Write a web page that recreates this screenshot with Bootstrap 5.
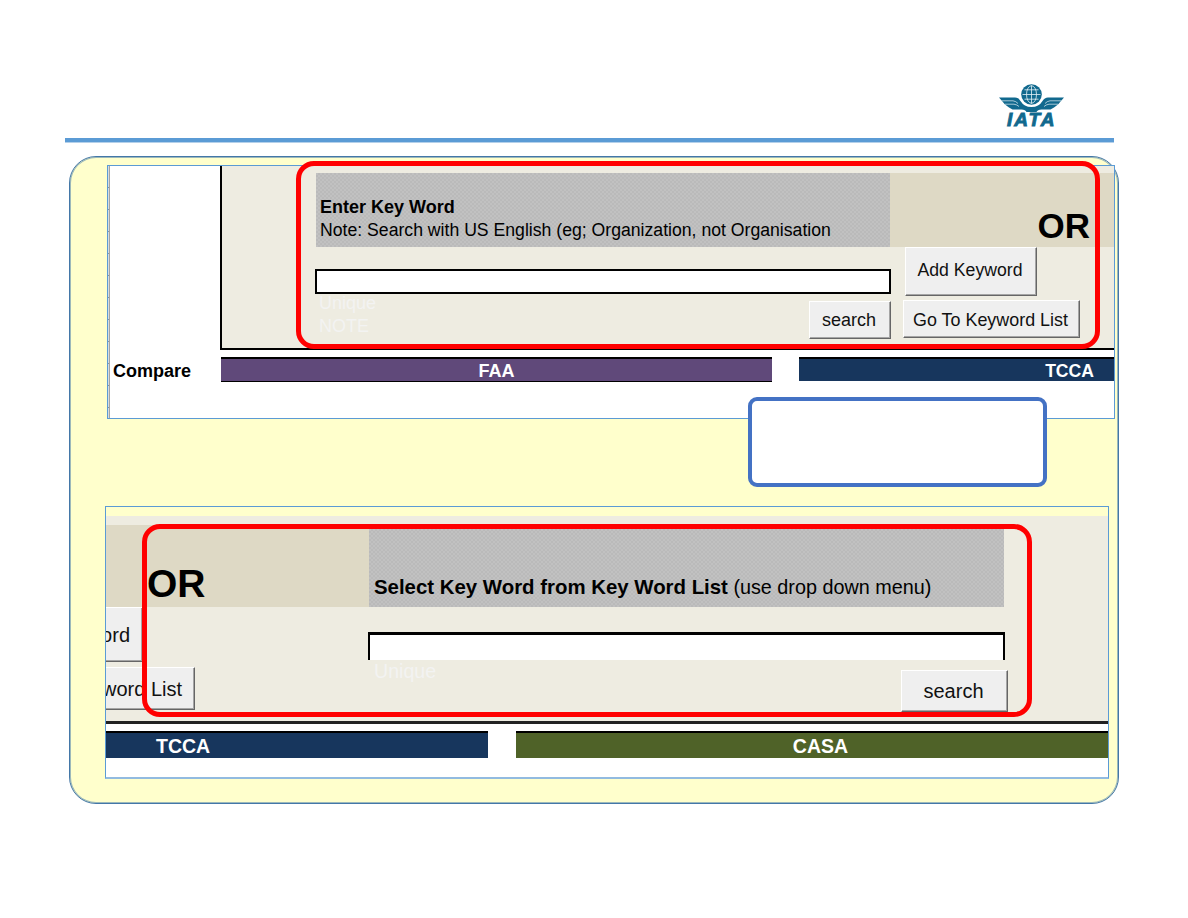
<!DOCTYPE html>
<html lang="en">
<head>
<meta charset="utf-8">
<meta name="viewport" content="width=device-width, initial-scale=1">
<title>IATA keyword search</title>
<link href="https://cdn.jsdelivr.net/npm/bootstrap@5.3.0/dist/css/bootstrap.min.css" rel="stylesheet">
<style>
body{font-family:"Liberation Sans",Arial,sans-serif;font-size:18px;line-height:23px;color:#000;height:918px;overflow:hidden;white-space:nowrap}
.slide-head{height:138px;padding:82px 121px 0 0}
.rule-line{height:5px;margin:0 74px 0 65px;background:#5b9bd5;border-bottom:1px solid #b4d0ea}
.panel{width:1050px;height:648px;margin:13px 0 0 69px;padding:8px 0 0 35px;border:1px solid #4377a8;box-shadow:inset 0 0 0 1px #9db9ba;border-radius:27px;background:#ffffcc}
.shot{border:1px solid #5b9bd5}
.shot-a{width:1008px;height:254px;margin-left:2px;background:#fff}
.shot-a-in{height:252px}
.strip{width:2px;background:repeating-linear-gradient(#d5dbe2 0 21px,#8a95a0 21px 22px);border-right:1px solid #a5a5a5}
.side{width:111px;padding:194px 0 0 3px}
.beige{background:#eeece1}
.sheet-a{height:184px;margin-left:-1px;border-left:2px solid #000;border-bottom:2px solid #000;padding-top:7px}
.grey-cell{background:#bfbfbf repeating-conic-gradient(#bababa 0 25%,#c1c1c1 0 50%) 0 0/4px 4px}
.tan-cell{background:#ded9c5}
.band-a{height:74px}
.band-a .grey-cell{width:574px;margin-left:94px;padding:23px 0 0 4px}
.note{font-size:17.65px}
.or-a{font-size:35px;line-height:36px;padding:35px 24px 0 0}
.or-b{font-size:39px;line-height:40px;padding:39px 0 0 41px}
.entry{width:576px;height:25px;border:2px solid #000;background:#fff}
.ghost{color:#f3f3f2}
.key-btn{font:17.65px/22px "Liberation Sans",Arial,sans-serif;color:#111;background:#efefef;border:1px solid;border-color:#fff #666 #666 #fff;box-shadow:inset -1px -1px #a5a5a5;border-radius:0;padding:0 2px 0 0}
.col-entry{width:576px;margin:22px 0 0 93px}
.bar{color:#fff;font-weight:700;border-top:2px solid #000;height:24px;line-height:24px}
.faa{width:551px;height:25px;background:#60497a;border-bottom:1px solid #000}
.navy{background:#17365d}
.green{background:#4f6228}
.shot-b{width:1004px;height:273px;margin-top:87px;padding-top:9px;border-bottom-width:2px;border-bottom-color:#92bbe0}
.sheet-b{height:208px;border-bottom:3px solid #222;padding-top:9px}
.band-b{height:82px}
.band-b .tan-cell{width:263px}
.band-b .grey-cell{width:635px;padding:50px 0 0 5px;font-size:19.8px;line-height:24px}
.band-b b{font-size:20.4px}
.left-keys{width:262px}
.entry-b{width:637px;height:28px;margin-top:25px;border:2px solid #000;border-top-width:3px;border-bottom:0;background:#fff}
.big{font-size:20px}
.mark-a,.mark-b{border:5px solid #f00;border-radius:18px}
.mark-a{left:296px;top:161px;width:804px;height:188px}
.mark-b{left:142px;top:524px;width:890px;height:193px}
.callout-box{left:748px;top:397px;width:299px;height:90px;border:4px solid #4472c4;border-radius:9px;background:#fff}
</style>
</head>
<body class="bg-white position-relative">
<header class="slide-head d-flex justify-content-end">
<svg width="70" height="48" viewBox="997 82 70 48" role="img" aria-label="IATA">
<g fill="#11698e">
<path d="M999 97.500H1015Q1018.500 97.500 1020.500 101Q1024 107 1031.500 107Q1039 107 1042.500 101Q1044.500 97.500 1048 97.500H1064L1061 101L1058 104.500L1054 107.500L1050.500 109.500H1041.500Q1037.500 109.500 1036.500 112H1026.500Q1025.500 109.500 1021.500 109.500H1012.500L1009 107.500L1005 104.500L1002 101Z"/>
<circle cx="1031.500" cy="94.500" r="10.300"/>
</g>
<g fill="none" stroke="#e6f1f5">
<ellipse cx="1031.500" cy="94.500" rx="5" ry="8.800" stroke-width=".8"/>
<path stroke-width=".8" d="M1031.500 85.500V103.500M1022.500 94.500H1040.500M1024.500 89.800H1038.500M1024.500 99.200H1038.500"/>
<path stroke-width=".7" d="M1001.500 100.800H1013Q1016 101.200 1018 103.500M1005 104.200H1014Q1017 104.600 1019 106.500M1061.500 100.800H1050Q1047 101.200 1045 103.500M1058 104.200H1049Q1046 104.600 1044 106.500"/>
</g>
<text x="1007" y="126.200" textLength="47.500" lengthAdjust="spacing" font-family="'Liberation Sans',Arial,sans-serif" font-size="19" font-weight="700" font-style="italic" fill="#11698e" stroke="#11698e" stroke-width=".9">IATA</text>
</svg>
</header>
<div class="rule-line"></div>

<main class="panel">
<section class="shot shot-a">
<div class="shot-a-in d-flex">
<div class="strip"></div>
<div class="side fw-bold">Compare</div>
<div class="flex-grow-1">
<div class="sheet-a beige">
<div class="band-a d-flex">
<div class="grey-cell"><div class="fw-bold">Enter Key Word</div><div class="note">Note: Search with US English (eg; Organization, not Organisation</div></div>
<div class="tan-cell flex-grow-1 text-end fw-bold or-a">OR</div>
</div>
<div class="d-flex">
<div class="col-entry">
<div class="entry"></div>
<div class="d-flex justify-content-between">
<div class="ghost ps-1"><div style="margin-top:-2px">Unique</div><div>NOTE</div></div>
<button class="key-btn" style="width:82px;height:38px;margin-top:7px;font-size:18px">search</button>
</div>
</div>
<div class="d-flex flex-column align-items-start" style="padding-left:12px">
<button class="key-btn pb-1" style="width:132px;height:49px;margin-left:2px">Add Keyword</button>
<button class="key-btn" style="width:177px;height:38px;margin-top:4px;padding-top:1px;font-size:17.9px">Go To Keyword List</button>
</div>
</div>
</div>
<div class="d-flex justify-content-between" style="margin-top:7px">
<div class="bar faa text-center">FAA</div>
<div class="bar navy text-end" style="width:315px;padding-right:20px;font-size:17.6px">TCCA</div>
</div>
</div>
</div>
</section>

<section class="shot shot-b">
<div class="sheet-b beige">
<div class="band-b d-flex">
<div class="tan-cell fw-bold or-b">OR</div>
<div class="grey-cell"><b>Select Key Word from Key Word List</b> (use drop down menu)</div>
</div>
<div class="d-flex">
<div class="left-keys">
<button class="key-btn big d-flex justify-content-end align-items-center border-start-0 overflow-hidden" style="width:37px;height:55px;padding-right:12px">ord</button>
<button class="key-btn big d-flex justify-content-end align-items-center border-start-0 overflow-hidden" style="width:89px;height:43px;margin-top:5px;padding-right:12px">word List</button>
</div>
<div>
<div class="entry-b"></div>
<div class="d-flex justify-content-between">
<div class="ghost" style="padding-left:6px;font-size:19.6px">Unique</div>
<button class="key-btn big" style="width:107px;height:42px;margin:10px -3px 0 0">search</button>
</div>
</div>
</div>
</div>
<div class="bg-white d-flex justify-content-between" style="height:53px;padding-top:7px">
<div class="bar navy" style="width:382px;height:27px;line-height:27px;padding-left:50px;font-size:19.5px">TCCA</div>
<div class="bar green text-center" style="width:592px;height:27px;line-height:27px;padding-left:17px;font-size:19.5px">CASA</div>
</div>
</section>
</main>

<div class="mark-a position-absolute"></div>
<div class="mark-b position-absolute"></div>
<div class="callout-box position-absolute"></div>
<script src="https://cdn.jsdelivr.net/npm/bootstrap@5.3.0/dist/js/bootstrap.bundle.min.js"></script>
</body>
</html>
